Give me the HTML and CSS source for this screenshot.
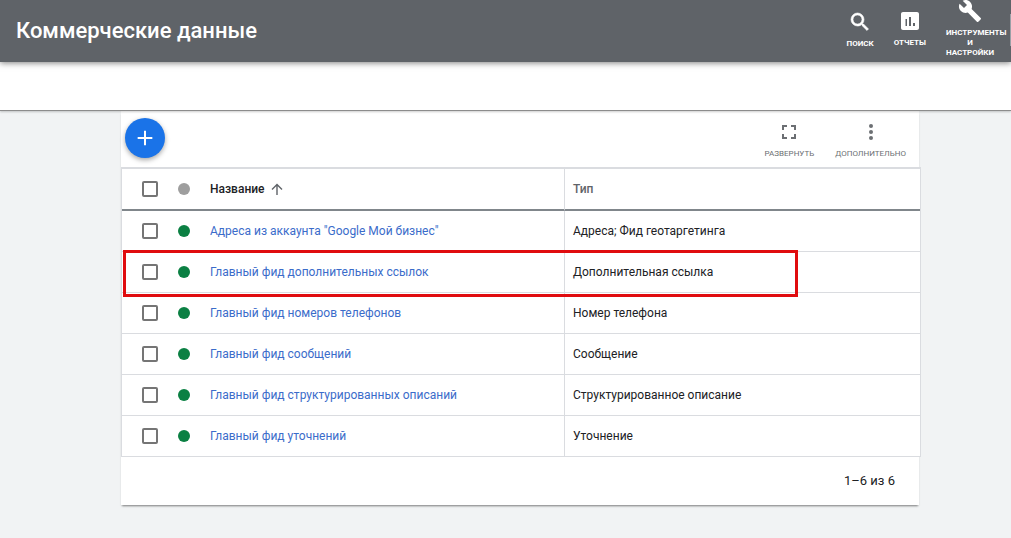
FILE: index.html
```html
<!DOCTYPE html>
<html lang="ru">
<head>
<meta charset="utf-8">
<title>Коммерческие данные</title>
<link rel="stylesheet" href="styles.css">
</head>
<body>
<header class="topbar">
  <h1 class="title">Коммерческие данные</h1>
  <nav class="tools">
    <button class="tool tool-search" type="button">
      <svg class="icon icon-bold" viewBox="0 0 24 24"><path d="M15.5 14h-.79l-.28-.27A6.47 6.47 0 0 0 16 9.5 6.5 6.5 0 1 0 9.5 16c1.61 0 3.09-.59 4.23-1.57l.27.28v.79l5 4.99L20.49 19l-4.99-5zm-6 0C7.01 14 5 11.99 5 9.5S7.01 5 9.5 5 14 7.01 14 9.5 11.99 14 9.5 14z"/></svg>
      <span class="tool-label">ПОИСК</span>
    </button>
    <button class="tool tool-reports" type="button">
      <svg class="icon" viewBox="0 0 24 24"><path d="M19 3H5c-1.1 0-2 .9-2 2v14c0 1.1.9 2 2 2h14c1.1 0 2-.9 2-2V5c0-1.100-.9-2-2-2zM9 17H7.500v-7H9v7zm4 0h-2V8h2v9zm4 0h-2v-3h2v3z"/></svg>
      <span class="tool-label">ОТЧЕТЫ</span>
    </button>
    <button class="tool tool-settings" type="button">
      <svg class="icon" viewBox="0 0 24 24"><path d="M22.7 19l-9.1-9.1c.9-2.3.4-5-1.5-6.9-2-2-5-2.4-7.4-1.3L9 6 6 9 1.6 4.7C.4 7.1.9 10.1 2.9 12.1c1.9 1.9 4.6 2.4 6.9 1.5l9.1 9.1c.4.4 1 .4 1.4 0l2.3-2.3c.5-.4.5-1.1.1-1.4z"/></svg>
      <span class="tool-label">ИНСТРУМЕНТЫ И НАСТРОЙКИ</span>
    </button>
  </nav>
  <span class="divider"></span>
</header>
<div class="subbar"></div>
<main class="page">
  <section class="card">
    <div class="toolbar">
      <button class="add" type="button" aria-label="Добавить">
        <svg class="icon" viewBox="0 0 24 24"><path d="M20 13.100h-6.900V20h-2.200v-6.900H4v-2.200h6.900V4h2.200v6.900H20z"/></svg>
      </button>
      <div class="actions">
        <button class="action" type="button">
          <svg class="icon" viewBox="0 0 24 24"><path d="M5 5h5v2H7v3H5zM14 5h5v5h-2V7h-3zM5 14h2v3h3v2H5zM17 14h2v5h-5v-2h3z"/></svg>
          <span>РАЗВЕРНУТЬ</span>
        </button>
        <button class="action" type="button">
          <svg class="icon" viewBox="0 0 24 24"><circle cx="12" cy="6" r="2"/><circle cx="12" cy="12" r="2"/><circle cx="12" cy="18" r="2"/></svg>
          <span>ДОПОЛНИТЕЛЬНО</span>
        </button>
      </div>
    </div>
    <table class="feeds">
      <thead>
        <tr>
          <th class="col-check"><input class="check" type="checkbox" aria-label="Выбрать все"></th>
          <th class="col-status"><span class="dot dot-all"></span></th>
          <th class="col-name"><span class="sort">Название <svg class="arrow" viewBox="0 0 12 12"><path d="M6 12V1.500M1 6.500l5-5 5 5"/></svg></span></th>
          <th class="col-type">Тип</th>
        </tr>
      </thead>
      <tbody>
        <tr>
          <td class="col-check"><input class="check" type="checkbox" aria-labelledby="f1"></td>
          <td><span class="dot"></span></td>
          <td><a id="f1" href="#">Адреса из аккаунта "Google Мой бизнес"</a></td>
          <td class="col-type">Адреса; Фид геотаргетинга</td>
        </tr>
        <tr class="marked">
          <td class="col-check"><input class="check" type="checkbox" aria-labelledby="f2"></td>
          <td><span class="dot"></span></td>
          <td><a id="f2" href="#">Главный фид дополнительных ссылок</a></td>
          <td class="col-type">Дополнительная ссылка<span class="frame"></span></td>
        </tr>
        <tr>
          <td class="col-check"><input class="check" type="checkbox" aria-labelledby="f3"></td>
          <td><span class="dot"></span></td>
          <td><a id="f3" href="#">Главный фид номеров телефонов</a></td>
          <td class="col-type">Номер телефона</td>
        </tr>
        <tr>
          <td class="col-check"><input class="check" type="checkbox" aria-labelledby="f4"></td>
          <td><span class="dot"></span></td>
          <td><a id="f4" href="#">Главный фид сообщений</a></td>
          <td class="col-type">Сообщение</td>
        </tr>
        <tr>
          <td class="col-check"><input class="check" type="checkbox" aria-labelledby="f5"></td>
          <td><span class="dot"></span></td>
          <td><a id="f5" href="#">Главный фид структурированных описаний</a></td>
          <td class="col-type">Структурированное описание</td>
        </tr>
        <tr>
          <td class="col-check"><input class="check" type="checkbox" aria-labelledby="f6"></td>
          <td><span class="dot"></span></td>
          <td><a id="f6" href="#">Главный фид уточнений</a></td>
          <td class="col-type">Уточнение</td>
        </tr>
      </tbody>
    </table>
    <footer class="pager">1–6 из 6</footer>
  </section>
</main>
</body>
</html>
```
FILE: styles.css
```css
* {
  box-sizing: border-box;
}

body {
  margin: 0;
  min-height: 100vh;
  background: #f1f3f4;
  color: #202124;
  font-family: Roboto, "Liberation Sans", sans-serif;
  font-size: 12px;
}

button {
  margin: 0;
  padding: 0;
  border: 0;
  background: none;
  color: inherit;
  font: inherit;
}

.icon {
  display: block;
  flex: none;
  width: 24px;
  height: 24px;
  fill: currentColor;
}

.icon-bold {
  stroke: currentColor;
  stroke-width: 0.6;
}

.topbar {
  position: relative;
  z-index: 2;
  display: flex;
  align-items: center;
  justify-content: space-between;
  height: 62px;
  padding: 0 17px 0 16px;
  background: #5f6368;
  color: #fff;
  box-shadow: 0 1px 6px rgba(0, 0, 0, 0.5);
}

.title {
  margin: 0;
  font-size: 22px;
  font-weight: 500;
  line-height: 24px;
}

.tools {
  display: flex;
  align-items: flex-start;
  align-self: stretch;
  gap: 20px;
}

.tool {
  display: flex;
  flex-direction: column;
  align-items: center;
  gap: 5px;
  font-size: 8px;
  font-weight: 700;
  line-height: 10px;
}

.tool-search {
  padding-top: 10px;
}

.tool-reports {
  padding-top: 9px;
}

.tool-settings {
  width: 48px;
}

.tool-settings .icon {
  margin-top: -1px;
}

.tool-label {
  max-width: 100%;
}

.divider {
  position: absolute;
  top: 14px;
  right: 0;
  width: 1px;
  height: 32px;
  background: #9aa0a6;
}

.subbar {
  position: relative;
  z-index: 1;
  height: 49px;
  border-bottom: 1px solid #8c8c8c;
  background: #fff;
  box-shadow: 0 1px 2px rgba(0, 0, 0, 0.2);
}

.page {
  padding: 0 92px 32px 121px;
}

.card {
  background: #fff;
  box-shadow: 0 2px 2px -1px rgba(0, 0, 0, 0.5);
}

.toolbar {
  display: flex;
  align-items: flex-start;
  justify-content: space-between;
  height: 56px;
  padding: 7px 13px 0 4px;
}

.add {
  display: grid;
  place-items: center;
  width: 40px;
  height: 40px;
  border-radius: 50%;
  background: #1a73e8;
  color: #fff;
  box-shadow: 0 2px 5px rgba(0, 0, 0, 0.35);
}

.add .icon {
  width: 22px;
  height: 22px;
}

.actions {
  display: flex;
  gap: 21px;
  padding-top: 2px;
  color: #6c6f73;
  font-size: 8px;
  line-height: 10px;
}

.action {
  display: flex;
  flex-direction: column;
  align-items: center;
  gap: 5px;
}

.feeds {
  width: calc(100% + 2px);
  border: 1px solid #dadce0;
  border-top-width: 2px;
  border-bottom: 0;
  border-spacing: 0;
  background: #fff;
  table-layout: fixed;
}

.feeds th,
.feeds td {
  height: 41px;
  padding: 0;
  border-bottom: 1px solid #dadce0;
  text-align: left;
  vertical-align: middle;
}

.feeds th {
  height: 42px;
  border-bottom: 2px solid #80868b;
  font-weight: 500;
}

.feeds .col-check {
  width: 56px;
  padding-left: 20px;
}

.col-status {
  width: 32px;
}

.feeds .col-type {
  width: 356px;
  padding-left: 8px;
  border-left: 1px solid #dadce0;
}

th.col-type {
  color: #5f6368;
}

.check {
  display: block;
  width: 16px;
  height: 16px;
  margin: 0;
  border: 2px solid #757575;
  border-radius: 2px;
  background: #fff;
  appearance: none;
}

.dot {
  display: block;
  width: 12px;
  height: 12px;
  border-radius: 50%;
  background: #0b8043;
}

.dot-all {
  background: #9e9e9e;
}

.sort {
  display: flex;
  align-items: center;
  gap: 6px;
}

.arrow {
  width: 12px;
  height: 12px;
  fill: none;
  stroke: #5f6368;
  stroke-width: 1.4;
}

.feeds a {
  color: #3b6cca;
  text-decoration: none;
}

.marked {
  position: relative;
}

.frame {
  position: absolute;
  top: -2px;
  left: 1px;
  width: 675px;
  height: 47px;
  border: 3px solid #e00c0f;
}

.pager {
  padding: 16px 24px;
  font-size: 13px;
  line-height: 16px;
  text-align: right;
}
```
